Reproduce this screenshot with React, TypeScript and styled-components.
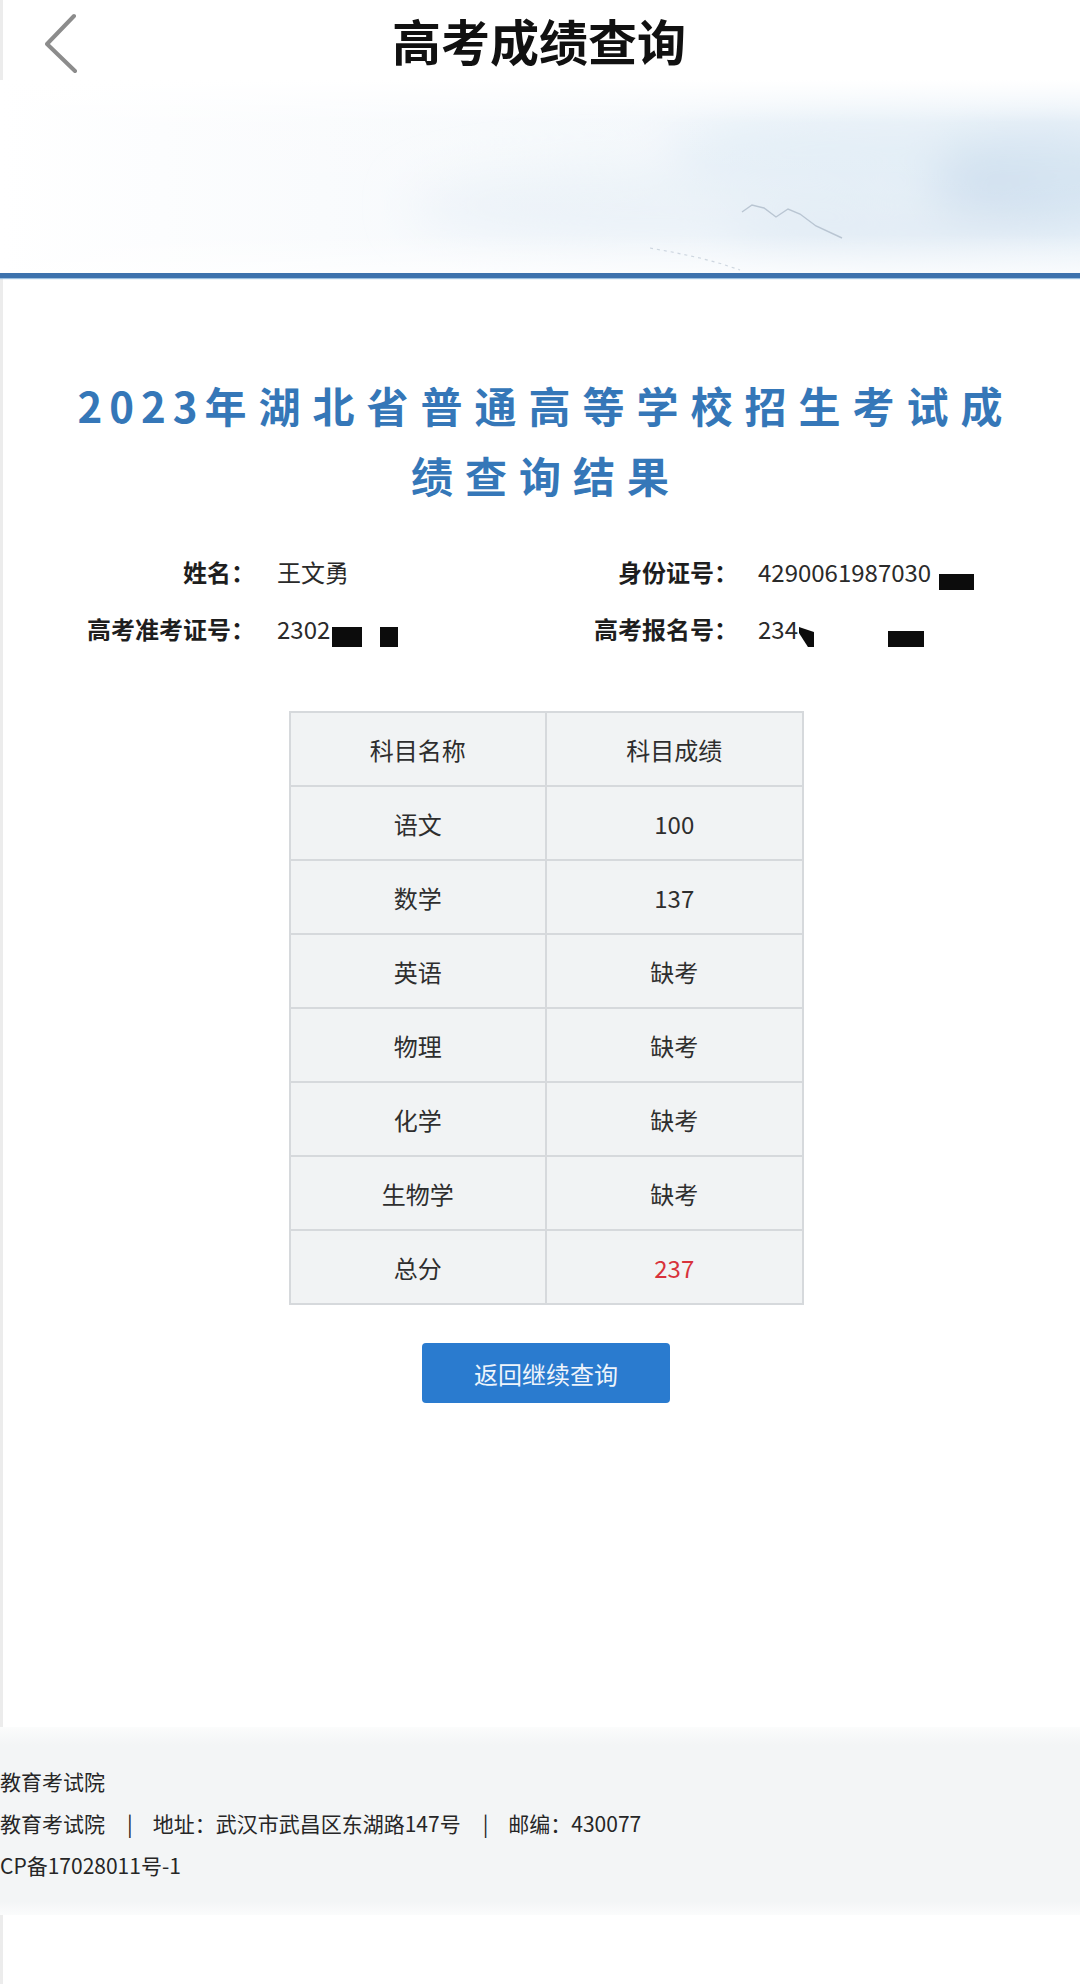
import React from 'react'
import styled, { createGlobalStyle } from 'styled-components'

const GlobalStyle = createGlobalStyle`
  html, body {
    margin: 0;
    padding: 0;
    background: #fff;
  }
  body {
    font-family: "Noto Sans CJK SC", "Liberation Sans", sans-serif;
    color: #333;
  }
`

const Page = styled.div`
  width: 1080px;
  min-height: 1984px;
  overflow: hidden;
  background: #fff;
  box-shadow: inset 3px 0 0 #ececec;
`

const Header = styled.header`
  display: grid;
  grid-template-columns: 1fr auto 1fr;
  align-items: center;
  height: 80px;
  padding: 0 45px 0 45px;
  box-sizing: border-box;
`

const BackIcon = styled.svg`
  display: block;
  width: 34px;
  height: 62px;
  margin-top: 8px;
`

const HeaderTitle = styled.h2`
  margin: 0;
  font-size: 49px;
  font-weight: 700;
  color: #111;
  letter-spacing: 0;
  line-height: 60px;
  transform: translateX(-1px);
`

const BannerArt = styled.svg`
  display: block;
  width: 1080px;
  height: 193px;
`

const BlueRule = styled.div`
  height: 5px;
  background: #3d72ad;
  box-shadow: 0 1px 1px #9cc0e0, 0 -1px 1px #a8c6e2;
`

const Content = styled.main`
  padding-left: 12px;
`

const ResultTitle = styled.h1`
  margin: 92px 0 0;
  font-size: 42px;
  line-height: 70px;
  font-weight: 700;
  color: #3577b8;
  letter-spacing: 12px;
  text-align: center;
`

const Year = styled.span`
  letter-spacing: 7px;
`

const InfoGrid = styled.div`
  display: grid;
  grid-template-columns: 243px 333px 150px 1fr;
  row-gap: 17px;
  margin-top: 42px;
  font-size: 24px;
  line-height: 40px;
`

const Label = styled.div`
  text-align: right;
  font-weight: 700;
  color: #1e1e1e;
  white-space: nowrap;
`

const Value = styled.div<{ $pad: number }>`
  padding-left: ${({ $pad }) => $pad}px;
  color: #2a2a2a;
  white-space: nowrap;
`

const Redact = styled.span<{ $w: number; $h: number; $ml: number; $slant?: boolean }>`
  display: inline-block;
  width: ${({ $w }) => $w}px;
  height: ${({ $h }) => $h}px;
  margin-left: ${({ $ml }) => $ml}px;
  background: #0c0c0c;
  vertical-align: -8px;
  clip-path: ${({ $slant }) => ($slant ? 'polygon(0 0, 100% 25%, 100% 100%, 60% 100%, 0 30%)' : 'none')};
`

const ScoreTable = styled.table`
  margin: 62px auto 0;
  width: 515px;
  border-collapse: collapse;
  background: #f1f3f4;
  border: 2px solid #d0d4d7;
`

const Cell = styled.td<{ $red?: boolean }>`
  height: 72px;
  width: 50%;
  padding: 0;
  border: 2px solid #d6d9dc;
  text-align: center;
  vertical-align: middle;
  font-size: 24px;
  color: ${({ $red }) => ($red ? '#d8323b' : '#2e2e2e')};
`

const BackButton = styled.button`
  display: block;
  margin: 38px auto 0;
  width: 248px;
  height: 60px;
  border: none;
  border-radius: 4px;
  background: #2a7bcf;
  color: #eef4fb;
  font-family: inherit;
  font-size: 24px;
  cursor: pointer;
`

const Footer = styled.footer`
  margin-top: 324px;
  height: 188px;
  box-sizing: border-box;
  padding-top: 33px;
  background: linear-gradient(180deg, #fbfcfc 0, #f3f5f6 18px, #f3f5f6 calc(100% - 14px), #fbfcfc 100%);
`

const FooterText = styled.div`
  font-size: 21px;
  line-height: 42px;
  color: #262626;
`

const FooterLine = styled.p`
  margin: 0;
  white-space: nowrap;
`

const Sep = styled.span`
  margin: 0 20px 0 22px;
`

const rows: [string, string, boolean?][] = [
  ['语文', '100'],
  ['数学', '137'],
  ['英语', '缺考'],
  ['物理', '缺考'],
  ['化学', '缺考'],
  ['生物学', '缺考'],
  ['总分', '237', true],
]

function Banner() {
  return (
    <BannerArt viewBox="0 0 1080 193" preserveAspectRatio="none">
      <defs>
        <linearGradient id="sky" x1="0" x2="1" y1="0" y2="0">
          <stop offset="0" stopColor="#ffffff" />
          <stop offset="0.45" stopColor="#f6f9fc" />
          <stop offset="1" stopColor="#eaf2f9" />
        </linearGradient>
        <linearGradient id="fade" x1="0" x2="0" y1="0" y2="1">
          <stop offset="0" stopColor="#ffffff" stopOpacity="1" />
          <stop offset="0.22" stopColor="#ffffff" stopOpacity="0.15" />
          <stop offset="0.8" stopColor="#ffffff" stopOpacity="0" />
          <stop offset="1" stopColor="#ffffff" stopOpacity="0.7" />
        </linearGradient>
        <filter id="soft" x="-30%" y="-60%" width="160%" height="220%">
          <feGaussianBlur stdDeviation="24" />
        </filter>
      </defs>
      <rect width="1080" height="193" fill="url(#sky)" />
      <g filter="url(#soft)">
        <ellipse cx="870" cy="72" rx="200" ry="42" fill="#dce9f4" opacity="0.75" />
        <ellipse cx="1045" cy="95" rx="110" ry="55" fill="#d3e3f1" />
        <ellipse cx="640" cy="125" rx="230" ry="36" fill="#e7f0f7" opacity="0.7" />
        <ellipse cx="990" cy="110" rx="55" ry="30" fill="#cddeee" />
        <ellipse cx="880" cy="152" rx="160" ry="28" fill="#e2ecf5" />
      </g>
      <rect width="1080" height="193" fill="url(#fade)" />
      <polyline
        points="742,132 752,125 764,128 776,137 788,129 800,134 816,146 842,158"
        fill="none"
        stroke="#a9b7c5"
        strokeWidth="1.4"
        opacity="0.75"
      />
      <polyline
        points="650,168 672,172 700,178 722,184 740,190"
        fill="none"
        stroke="#c3cdd8"
        strokeWidth="1.2"
        strokeDasharray="3 4"
        opacity="0.8"
      />
    </BannerArt>
  )
}

export default function App() {
  return (
    <Page>
      <GlobalStyle />
      <Header>
        <BackIcon viewBox="0 0 34 62">
          <polyline points="29,3 2,31 30,58" fill="none" stroke="#8c8c8c" strokeWidth="4" strokeLinecap="round" strokeLinejoin="round" />
        </BackIcon>
        <HeaderTitle>高考成绩查询</HeaderTitle>
        <span />
      </Header>
      <Banner />
      <BlueRule />

      <Content>
        <ResultTitle>
          <Year>2023</Year>年湖北省普通高等学校招生考试成
          <br />
          绩查询结果
        </ResultTitle>

        <InfoGrid>
          <Label>姓名：</Label>
          <Value $pad={22}>王文勇</Value>
          <Label>身份证号：</Label>
          <Value $pad={20}>
            4290061987030
            <Redact $w={35} $h={16} $ml={8} />
          </Value>

          <Label>高考准考证号：</Label>
          <Value $pad={22}>
            2302
            <Redact $w={30} $h={20} $ml={2} />
            <Redact $w={18} $h={20} $ml={18} />
          </Value>
          <Label>高考报名号：</Label>
          <Value $pad={20}>
            234<Redact $w={15} $h={20} $ml={1} $slant />
            <Redact $w={36} $h={16} $ml={74} />
          </Value>
        </InfoGrid>

        <ScoreTable>
          <tbody>
            <tr>
              <Cell>科目名称</Cell>
              <Cell>科目成绩</Cell>
            </tr>
            {rows.map(([name, score, red]) => (
              <tr key={name}>
                <Cell>{name}</Cell>
                <Cell $red={red}>{score}</Cell>
              </tr>
            ))}
          </tbody>
        </ScoreTable>

        <BackButton>返回继续查询</BackButton>
      </Content>

      <Footer>
        <FooterText>
          <FooterLine>教育考试院</FooterLine>
          <FooterLine>
            教育考试院<Sep>|</Sep>地址：武汉市武昌区东湖路147号<Sep>|</Sep>邮编：430077
          </FooterLine>
          <FooterLine>CP备17028011号-1</FooterLine>
        </FooterText>
      </Footer>
    </Page>
  )
}
